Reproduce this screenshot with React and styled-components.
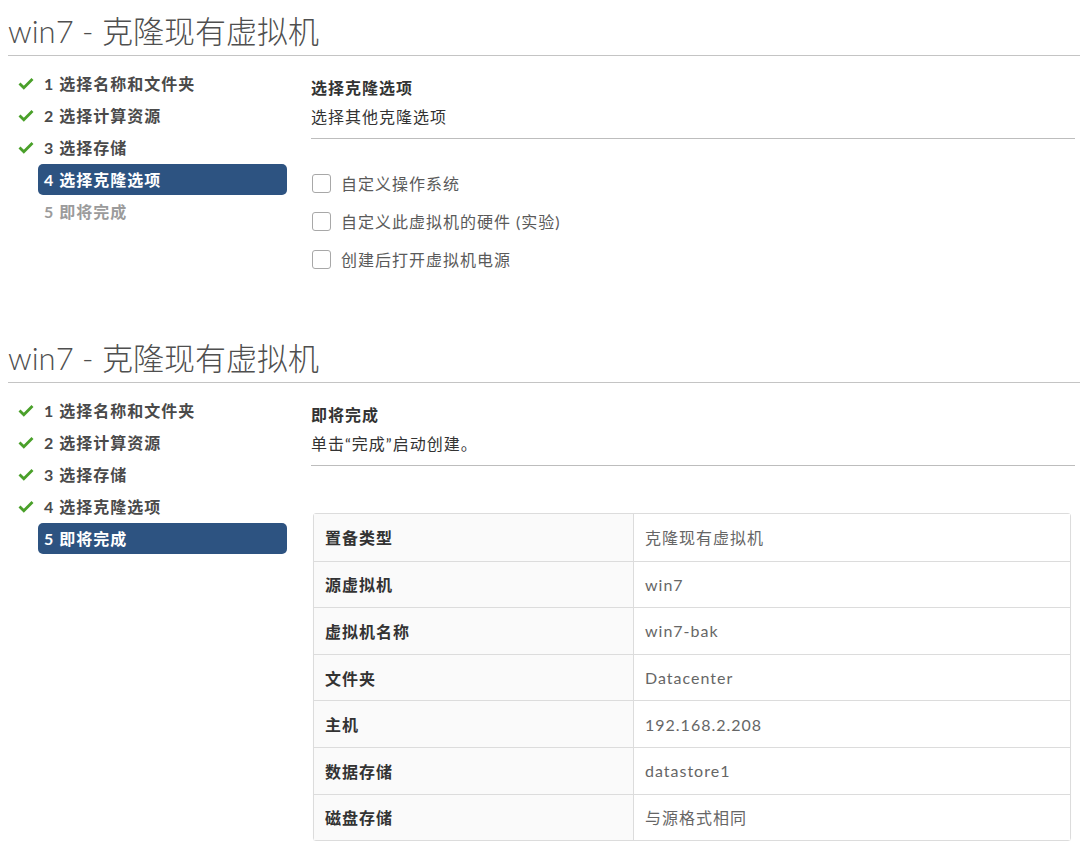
import React from "react"
import styled, { createGlobalStyle } from "styled-components"

const GlobalStyle = createGlobalStyle`
  html, body {
    margin: 0;
    padding: 0;
    background: #fff;
  }
  body {
    font-family: Lato, "Noto Sans", "Noto Sans CJK SC", sans-serif;
    color: #333;
    font-size: 16px;
    letter-spacing: 1px;
  }
`

const Page = styled.div`
  width: 1080px;
  padding-left: 8px;
  box-sizing: border-box;
`

const Section = styled.section`
  margin-bottom: ${({ $gap }) => $gap || 0}px;
`

const Title = styled.h1`
  margin: 0;
  height: 56px;
  padding-top: 4px;
  box-sizing: border-box;
  display: flex;
  align-items: center;
  font-size: 31px;
  font-weight: 300;
  letter-spacing: 0;
  color: #4f4f4f;
  border-bottom: 1px solid #c4c4c4;
`

const Body = styled.div`
  display: flex;
  gap: 24px;
`

const Nav = styled.ul`
  list-style: none;
  margin: 0;
  padding: 11px 0 0 0;
  width: 279px;
  flex-shrink: 0;
`

const Step = styled.li`
  display: flex;
  align-items: center;
  height: 32px;
`

const IconSlot = styled.span`
  width: 30px;
  display: flex;
  justify-content: flex-end;
  padding-right: 4px;
  box-sizing: border-box;
`

const StepLabel = styled.span`
  flex: 1;
  height: 31px;
  display: flex;
  align-items: center;
  padding: 0 6px;
  border-radius: 5px;
  font-weight: 700;
  background: ${({ $active }) => ($active ? "#2d5381" : "transparent")};
  color: ${({ $active, $done }) => ($active ? "#fff" : $done ? "#4a4a4a" : "#9b9b9b")};
`

const Content = styled.div`
  flex: 1;
  padding-right: 5px;
`

const Header = styled.div`
  padding-top: 22px;
  padding-bottom: 11px;
  border-bottom: 1px solid #bdbdbd;
`

const HeaderTitle = styled.div`
  font-weight: 700;
  line-height: 20px;
  margin-bottom: 9px;
  color: #333;
`

const HeaderDesc = styled.div`
  line-height: 20px;
  color: #333;
`

const Options = styled.div`
  margin-top: 25px;
  display: flex;
  flex-direction: column;
`

const Option = styled.label`
  display: flex;
  align-items: center;
  gap: 10px;
  height: 38px;
  color: #5a5a5a;
  padding-left: 1px;
`

const Box = styled.span`
  width: 17px;
  height: 17px;
  border: 1px solid #a8a8a8;
  border-radius: 3px;
  background: #fff;
  flex-shrink: 0;
`

const Table = styled.div`
  margin: 47px 4px 0 2px;
  border: 1px solid #dcdcdc;
  border-radius: 3px;
  box-shadow: 0 1px 1px rgba(0, 0, 0, 0.04);
`

const Row = styled.div`
  display: grid;
  grid-template-columns: 320px 1fr;
  height: 46.6px;
  box-sizing: border-box;
  border-top: ${({ $first }) => ($first ? "none" : "1px solid #dcdcdc")};
`

const Cell = styled.div`
  display: flex;
  align-items: center;
  padding-left: 11px;
  font-weight: ${({ $label }) => ($label ? 700 : 400)};
  color: ${({ $label }) => ($label ? "#333" : "#666")};
  background: ${({ $label }) => ($label ? "#fafafa" : "#fff")};
  border-right: ${({ $label }) => ($label ? "1px solid #dcdcdc" : "none")};
`

const Check = () => (
  <svg width="16" height="13" viewBox="0 0 16 13">
    <path d="M1.5 6.5 L5.8 10.8 L14.5 2" fill="none" stroke="#4aa02a" strokeWidth="2.8" />
  </svg>
)

const steps = ["选择名称和文件夹", "选择计算资源", "选择存储", "选择克隆选项", "即将完成"]

const Steps = ({ current }) => (
  <Nav>
    {steps.map((s, i) => (
      <Step key={s}>
        <IconSlot>{i < current && <Check />}</IconSlot>
        <StepLabel $active={i === current} $done={i < current}>
          {i + 1} {s}
        </StepLabel>
      </Step>
    ))}
  </Nav>
)

const summary = [
  ["置备类型", "克隆现有虚拟机"],
  ["源虚拟机", "win7"],
  ["虚拟机名称", "win7-bak"],
  ["文件夹", "Datacenter"],
  ["主机", "192.168.2.208"],
  ["数据存储", "datastore1"],
  ["磁盘存储", "与源格式相同"],
]

const options = ["自定义操作系统", "自定义此虚拟机的硬件 (实验)", "创建后打开虚拟机电源"]

const App = () => {
  return (
    <Page>
      <GlobalStyle />
      <Section $gap={49}>
        <Title>win7 - 克隆现有虚拟机</Title>
        <Body>
          <Steps current={3} />
          <Content>
            <Header>
              <HeaderTitle>选择克隆选项</HeaderTitle>
              <HeaderDesc>选择其他克隆选项</HeaderDesc>
            </Header>
            <Options>
              {options.map((o) => (
                <Option key={o}>
                  <Box />
                  {o}
                </Option>
              ))}
            </Options>
          </Content>
        </Body>
      </Section>
      <Section>
        <Title>win7 - 克隆现有虚拟机</Title>
        <Body>
          <Steps current={4} />
          <Content>
            <Header>
              <HeaderTitle>即将完成</HeaderTitle>
              <HeaderDesc>单击“完成”启动创建。</HeaderDesc>
            </Header>
            <Table>
              {summary.map(([k, v], i) => (
                <Row key={k} $first={i === 0}>
                  <Cell $label>{k}</Cell>
                  <Cell>{v}</Cell>
                </Row>
              ))}
            </Table>
          </Content>
        </Body>
      </Section>
    </Page>
  )
}

export default App
